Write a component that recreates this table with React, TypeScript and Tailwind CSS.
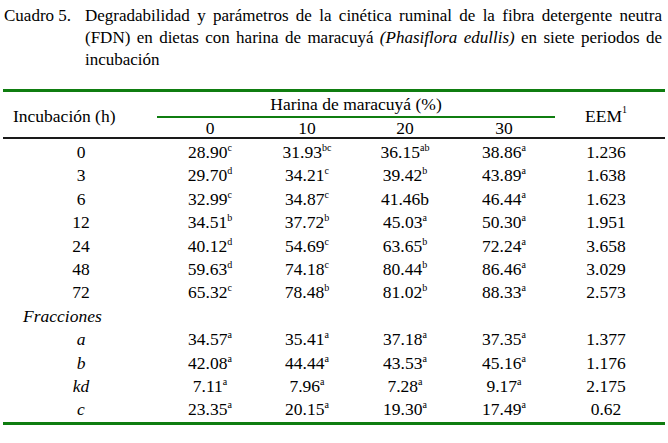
const rows: { label: string; cells: [string, string][]; eem: string }[] = [
  { label: "0", cells: [["28.90", "c"], ["31.93", "bc"], ["36.15", "ab"], ["38.86", "a"]], eem: "1.236" },
  { label: "3", cells: [["29.70", "d"], ["34.21", "c"], ["39.42", "b"], ["43.89", "a"]], eem: "1.638" },
  { label: "6", cells: [["32.99", "c"], ["34.87", "c"], ["41.46b", ""], ["46.44", "a"]], eem: "1.623" },
  { label: "12", cells: [["34.51", "b"], ["37.72", "b"], ["45.03", "a"], ["50.30", "a"]], eem: "1.951" },
  { label: "24", cells: [["40.12", "d"], ["54.69", "c"], ["63.65", "b"], ["72.24", "a"]], eem: "3.658" },
  { label: "48", cells: [["59.63", "d"], ["74.18", "c"], ["80.44", "b"], ["86.46", "a"]], eem: "3.029" },
  { label: "72", cells: [["65.32", "c"], ["78.48", "b"], ["81.02", "b"], ["88.33", "a"]], eem: "2.573" },
];

const fracciones: { label: string; cells: [string, string][]; eem: string }[] = [
  { label: "a", cells: [["34.57", "a"], ["35.41", "a"], ["37.18", "a"], ["37.35", "a"]], eem: "1.377" },
  { label: "b", cells: [["42.08", "a"], ["44.44", "a"], ["43.53", "a"], ["45.16", "a"]], eem: "1.176" },
  { label: "kd", cells: [["7.11", "a"], ["7.96", "a"], ["7.28", "a"], ["9.17", "a"]], eem: "2.175" },
  { label: "c", cells: [["23.35", "a"], ["20.15", "a"], ["19.30", "a"], ["17.49", "a"]], eem: "0.62" },
];

const cols = "grid grid-cols-[158px_98px_96px_100px_98px_1fr]";

function Value({ v, s }: { v: string; s: string }) {
  return (
    <div className="text-center">
      {v}
      {s && <sup className="text-[10px] top-[-7px]">{s}</sup>}
    </div>
  );
}

export default function App() {
  return (
    <div className="w-[668px] h-[443px] bg-white text-black overflow-hidden font-['Liberation_Serif','Times_New_Roman',serif]">
      {/* caption */}
      <div className="flex pt-[5px] pl-[4px] text-[17px] leading-[22px]">
        <div className="w-[81px] shrink-0">Cuadro 5.</div>
        <p className="w-[577px] text-justify">
          Degradabilidad y parámetros de la cinética ruminal de la fibra detergente neutra (FDN) en dietas con harina
          de maracuyá <i>(Phasiflora edullis)</i> en siete periodos de incubación
        </p>
      </div>

      {/* table */}
      <div className="mt-[18px] mx-[3px] text-[17.5px] border-t-[3px] border-b-[3px] border-[#0f7d10]">
        <div className={`${cols} grid-rows-[26px_19px] border-b-2 border-[#1a1a1a]`}>
          <div className="row-span-2 flex items-center pl-[10px] pt-[4px]">Incubación (h)</div>
          <div className="col-span-4 -ml-[4px] -mr-[2px] border-b-2 border-[#0f7d10] text-center leading-[24px]">
            Harina de maracuyá (%)
          </div>
          <div className="row-span-2 flex items-center justify-center pr-[6px] pt-[4px]">
            EEM<sup className="text-[10px] top-[-7px]">1</sup>
          </div>
          <div className="text-center leading-[20px]">0</div>
          <div className="text-center leading-[20px]">10</div>
          <div className="text-center leading-[20px]">20</div>
          <div className="text-center leading-[20px]">30</div>
        </div>

        <div className="pt-[2px] leading-[23.4px]">
          {rows.map((r) => (
            <div key={r.label} className={`${cols} h-[23.4px]`}>
              <div className="text-center pr-[2px]">{r.label}</div>
              {r.cells.map(([v, s], i) => (
                <Value key={i} v={v} s={s} />
              ))}
              <div className="text-center pr-[6px]">{r.eem}</div>
            </div>
          ))}
          <div className={`${cols} h-[23.4px]`}>
            <div className="pl-[20px] italic">Fracciones</div>
          </div>
          {fracciones.map((r) => (
            <div key={r.label} className={`${cols} h-[23.4px]`}>
              <div className="text-center pr-[2px] italic">{r.label}</div>
              {r.cells.map(([v, s], i) => (
                <Value key={i} v={v} s={s} />
              ))}
              <div className="text-center pr-[6px]">{r.eem}</div>
            </div>
          ))}
        </div>
      </div>
    </div>
  );
}
